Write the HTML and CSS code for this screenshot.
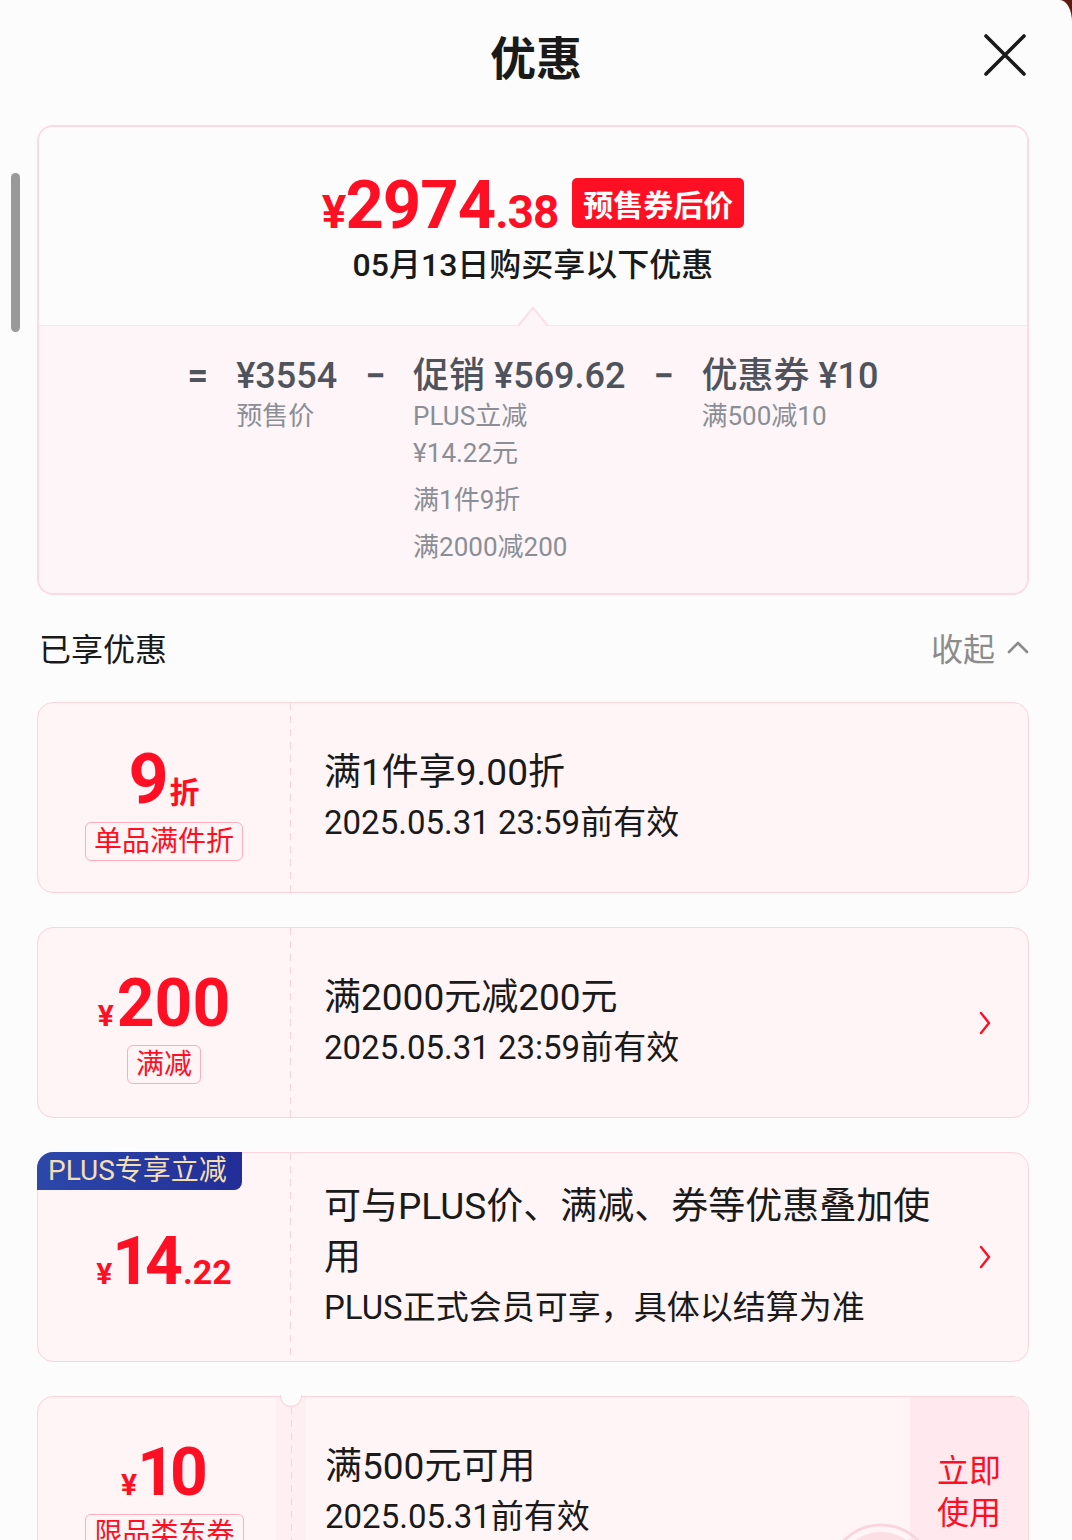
FILE: index.html
```html
<!DOCTYPE html>
<html lang="zh-CN">
<head>
<meta charset="utf-8">
<title>优惠</title>
<link rel="stylesheet" href="styles.css">
</head>
<body>
<div class="sheet">
  <div class="scrollbar"></div>
  <header class="header">
    <h1 class="title">优惠</h1>
    <button class="close" aria-label="关闭">
      <svg width="44" height="44" viewBox="0 0 44 44"><path d="M3 3 L41 41 M41 3 L3 41" stroke="#1a1a1a" stroke-width="3.6" stroke-linecap="round" fill="none"/></svg>
    </button>
  </header>

  <main class="content">
    <section class="summary">
      <div class="summary-top">
        <div class="price-line">
          <span class="price"><span class="p-yen">¥</span><span class="p-int">2974</span><span class="p-dec">.38</span></span>
          <span class="badge">预售券后价</span>
        </div>
        <div class="subtitle">05月13日购买享以下优惠</div>
      </div>
      <div class="summary-bottom">
        <svg class="pointer" width="32" height="22" viewBox="0 0 32 22">
          <polygon points="0,22 16,2 32,22" fill="#fdf5f8"/>
          <path d="M1 21 L16 2.5 L31 21" stroke="#fde0e7" stroke-width="2" fill="none"/>
        </svg>
        <div class="formula">
          <span class="op">=</span>
          <div class="term">
            <div class="term-main">¥3554</div>
            <div class="term-sub">预售价</div>
          </div>
          <span class="op">−</span>
          <div class="term">
            <div class="term-main">促销 ¥569.62</div>
            <div class="term-sub">PLUS立减<br>¥14.22元</div>
            <div class="term-sub">满1件9折</div>
            <div class="term-sub">满2000减200</div>
          </div>
          <span class="op">−</span>
          <div class="term">
            <div class="term-main">优惠券 ¥10</div>
            <div class="term-sub">满500减10</div>
          </div>
        </div>
      </div>
    </section>

    <div class="section-head">
      <span class="section-title">已享优惠</span>
      <span class="collapse">收起
        <svg width="22" height="14" viewBox="0 0 22 14"><path d="M2 12 L11 3 L20 12" stroke="#8c8c8c" stroke-width="2.6" fill="none" stroke-linecap="round" stroke-linejoin="round"/></svg>
      </span>
    </div>

    <div class="coupons">
      <div class="coupon">
        <div class="c-left">
          <div class="amount"><span class="a-big a-nine">9</span><span class="a-unit">折</span></div>
          <span class="tag">单品满件折</span>
        </div>
        <div class="c-divider"></div>
        <div class="c-body">
          <div class="c-title">满1件享9.00折</div>
          <div class="c-date">2025.05.31 23:59前有效</div>
        </div>
      </div>

      <div class="coupon">
        <div class="c-left">
          <div class="amount"><span class="a-cur">¥</span><span class="a-big">200</span></div>
          <span class="tag">满减</span>
        </div>
        <div class="c-divider"></div>
        <div class="c-body">
          <div class="c-title">满2000元减200元</div>
          <div class="c-date">2025.05.31 23:59前有效</div>
        </div>
        <div class="arrow">
          <svg width="14" height="24" viewBox="0 0 14 24"><path d="M3 2 L11 12 L3 22" stroke="#ff0f23" stroke-width="2.4" fill="none" stroke-linecap="round" stroke-linejoin="round"/></svg>
        </div>
      </div>

      <div class="coupon coupon-plus">
        <span class="plus-tag">PLUS专享立减</span>
        <div class="c-left">
          <div class="amount"><span class="a-cur">¥</span><span class="a-big a-cond">14</span><span class="a-dec">.22</span></div>
        </div>
        <div class="c-divider"></div>
        <div class="c-body">
          <div class="c-title">可与PLUS价、满减、券等优惠叠加使用</div>
          <div class="c-date">PLUS正式会员可享，具体以结算为准</div>
        </div>
        <div class="arrow">
          <svg width="14" height="24" viewBox="0 0 14 24"><path d="M3 2 L11 12 L3 22" stroke="#ff0f23" stroke-width="2.4" fill="none" stroke-linecap="round" stroke-linejoin="round"/></svg>
        </div>
      </div>

      <div class="coupon coupon-ticket">
        <div class="c-left c-left-ticket">
          <div class="amount"><span class="a-cur">¥</span><span class="a-big a-cond">10</span></div>
          <span class="tag">限品类东券</span>
        </div>
        <div class="c-strip">
          <span class="notch"></span>
          <div class="c-divider"></div>
        </div>
        <div class="c-body c-body-ticket">
          <div class="c-title">满500元可用</div>
          <div class="c-date">2025.05.31前有效</div>
        </div>
        <div class="action">立即<br>使用</div>
        <svg class="stamp" width="120" height="120" viewBox="0 0 120 120">
          <circle cx="60" cy="60" r="52" fill="none" stroke="#fad5dd" stroke-width="3"/>
          <circle cx="60" cy="60" r="45" fill="#fcdfe5"/>
        </svg>
      </div>
    </div>
  </main>
</div>
</body>
</html>
```

FILE: styles.css
```css
html, body {
  margin: 0;
  padding: 0;
  background: #5e1b10;
}

.sheet {
  position: relative;
  min-height: 1540px;
  background: #fcfcfc;
  border-top-right-radius: 12px 22px;
  font-family: Roboto, "Noto Sans CJK SC", sans-serif;
  color: #1a1a1a;
  overflow: hidden;
}

.scrollbar {
  position: absolute;
  left: 11px;
  top: 173px;
  width: 9px;
  height: 159px;
  border-radius: 5px;
  background: #999999;
}

.header {
  position: relative;
  height: 110px;
  display: flex;
  align-items: center;
  justify-content: center;
}

.title {
  margin: 0;
  font-family: "Noto Sans CJK SC", sans-serif;
  font-size: 46px;
  font-weight: 700;
  line-height: 1;
  color: #1a1a1a;
}

.close {
  position: absolute;
  right: 45px;
  top: 33px;
  width: 44px;
  height: 44px;
  padding: 0;
  border: 0;
  background: transparent;
  display: flex;
}

.content {
  padding: 15px 43px 0 37px;
}

/* summary card */
.summary {
  border: 2px solid #fdd9e1;
  border-radius: 16px;
  overflow: hidden;
}

.summary-top {
  padding: 45px 0 40px;
  display: flex;
  flex-direction: column;
  align-items: center;
  background: #fcfcfc;
}

.price-line {
  display: flex;
  align-items: center;
  gap: 14px;
  height: 66px;
}

.price {
  font-family: Roboto, sans-serif;
  font-weight: 700;
  color: #ff0f23;
  line-height: 1;
  letter-spacing: -1px;
}

.p-yen { font-size: 46px; }
.p-int { font-size: 67px; }
.p-dec { font-size: 46px; }

.badge {
  background: #ff0f23;
  color: #ffffff;
  font-family: "Noto Sans CJK SC", sans-serif;
  font-weight: 700;
  font-size: 30px;
  line-height: 50px;
  padding: 0 11px;
  border-radius: 5px;
  margin-bottom: 4px;
}

.subtitle {
  margin-top: 7px;
  font-size: 32px;
  line-height: 40px;
  font-weight: 500;
  color: #1a1a1a;
}

.summary-bottom {
  position: relative;
  border-top: 1px solid #fde3e9;
  background: #fdf5f8;
  padding: 28px 0 27px;
}

.pointer {
  position: absolute;
  left: 50%;
  top: -21px;
  margin-left: -16px;
}

.formula {
  display: flex;
  justify-content: center;
  align-items: flex-start;
  gap: 28px;
}

.op,
.term-main {
  font-size: 36px;
  line-height: 44px;
  font-weight: 500;
  color: #4f535b;
  white-space: nowrap;
}

.op {
  font-weight: 700;
}

.term-sub {
  font-size: 26px;
  line-height: 37px;
  color: #8b8e95;
  white-space: nowrap;
}

.term-sub + .term-sub {
  margin-top: 10px;
}

/* section head */
.section-head {
  margin-top: 30px;
  height: 44px;
  display: flex;
  align-items: center;
  justify-content: space-between;
}

.section-title {
  font-size: 32px;
  color: #1a1a1a;
  padding-left: 2px;
}

.collapse {
  display: flex;
  align-items: center;
  gap: 12px;
  font-size: 32px;
  color: #8c8c8c;
}

/* coupons */
.coupons {
  margin-top: 33px;
  display: flex;
  flex-direction: column;
  gap: 34px;
}

.coupon {
  position: relative;
  display: flex;
  min-height: 191px;
  box-sizing: border-box;
  border: 1px solid #fdd3dc;
  border-radius: 16px;
  background: #fff5f7;
}

.c-left {
  width: 252px;
  flex: none;
  box-sizing: border-box;
  padding-top: 10px;
  display: flex;
  flex-direction: column;
  align-items: center;
  justify-content: center;
}

.c-divider {
  width: 1px;
  flex: none;
  background: repeating-linear-gradient(to bottom, #fcd3dc 0 7px, transparent 7px 13px);
}

.amount {
  display: flex;
  align-items: baseline;
  color: #ff0f23;
  font-family: Roboto, sans-serif;
  font-weight: 700;
  line-height: 1;
}

.a-big { font-size: 66px; }
.a-nine { font-size: 70px; }
.a-cond { letter-spacing: -5px; margin-right: 5px; margin-left: -3px; }
.a-unit {
  font-family: "Noto Sans CJK SC", sans-serif;
  font-size: 30px;
  margin-left: 1px;
}
.a-cur { font-size: 30px; margin-right: 3px; }
.a-dec { font-size: 34px; }

.tag {
  margin-top: 8px;
  border: 1px solid #fcaebd;
  border-radius: 6px;
  padding: 0 8px;
  font-size: 28px;
  line-height: 37px;
  color: #ff0f23;
}

.c-body {
  flex: 1;
  min-width: 0;
  padding: 28px 0 28px 33px;
  display: flex;
  flex-direction: column;
  justify-content: center;
}

.c-title {
  font-size: 37px;
  line-height: 51px;
  color: #1a1a1a;
}

.c-date {
  font-size: 33px;
  line-height: 50px;
  color: #1a1a1a;
}

.arrow {
  width: 70px;
  margin-right: 8px;
  flex: none;
  display: flex;
  align-items: center;
  justify-content: center;
}

.plus-tag {
  position: absolute;
  left: -1px;
  top: -1px;
  width: 205px;
  height: 38px;
  box-sizing: border-box;
  padding-left: 11px;
  border-radius: 16px 0 8px 0;
  background: linear-gradient(90deg, #2d48aa, #222d97);
  color: #f3dfb3;
  font-size: 28px;
  line-height: 38px;
  white-space: nowrap;
}

/* ticket coupon */
.c-left-ticket {
  width: 238px;
  padding-left: 15px;
}

.c-strip {
  position: relative;
  width: 30px;
  flex: none;
  display: flex;
  justify-content: center;
  background: #fdeff2;
}

.c-strip .c-divider {
  margin-top: 10px;
}

.notch {
  position: absolute;
  left: 4px;
  top: -2px;
  width: 22px;
  height: 12px;
  box-sizing: border-box;
  border: 1px solid #fdd3dc;
  border-top: 0;
  border-radius: 0 0 11px 11px;
  background: #fcfcfc;
}

.c-body-ticket {
  padding-left: 19px;
}

.action {
  width: 118px;
  flex: none;
  display: flex;
  align-items: center;
  justify-content: center;
  text-align: center;
  background: #ffe8ee;
  border-radius: 0 15px 15px 0;
  color: #ff0f23;
  font-size: 32px;
  line-height: 42px;
}

.stamp {
  position: absolute;
  left: 783px;
  top: 120px;
}
```
